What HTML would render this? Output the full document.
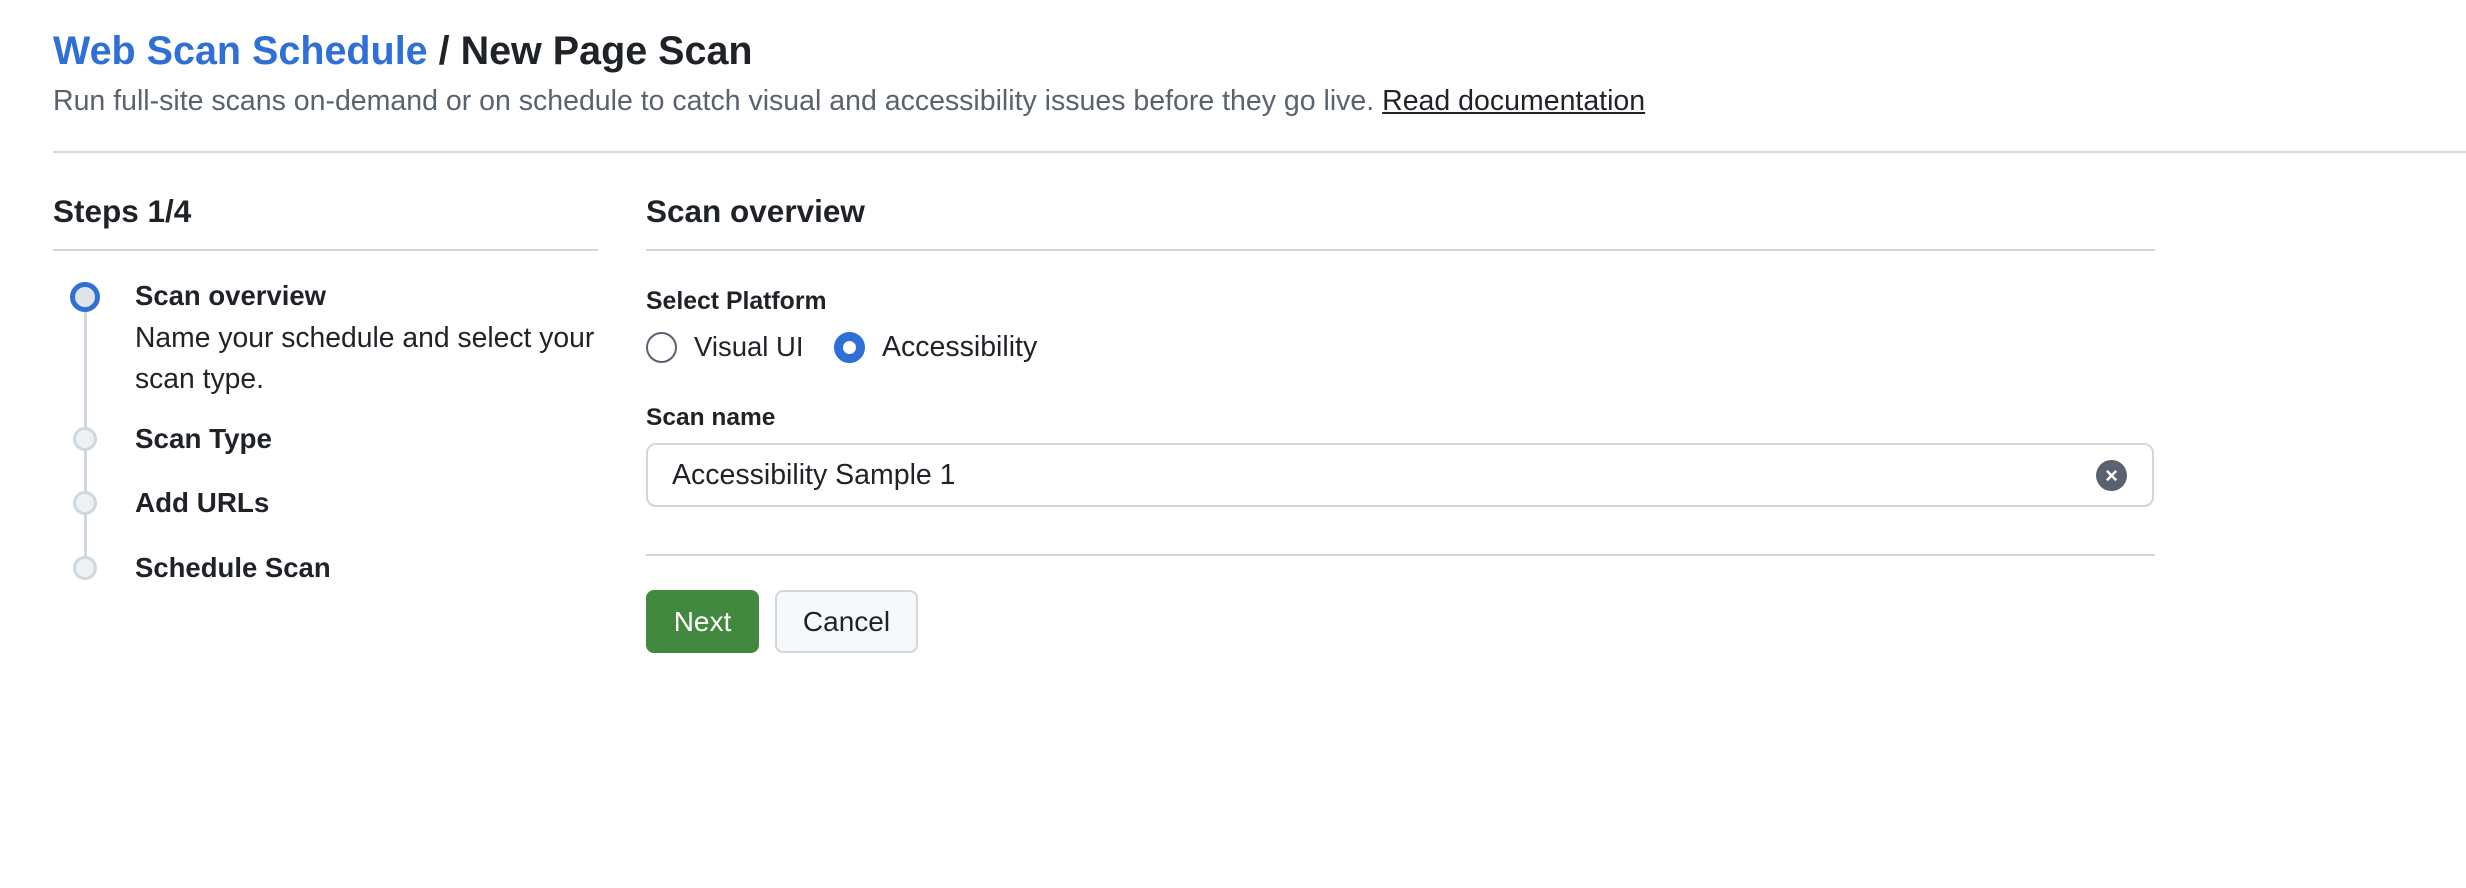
<!DOCTYPE html>
<html><head><meta charset="utf-8"><style>
*{box-sizing:border-box;margin:0;padding:0}
body{width:2466px;height:888px;background:#fff;font-family:"Liberation Sans",sans-serif;color:#1f2328;position:relative;overflow:hidden}
.a{position:absolute;white-space:nowrap}
.hr{position:absolute;height:2px;background:#d0d7de}
.circ{position:absolute;border-radius:50%}
</style></head><body>
<div class="a" style="left:53px;top:27px;font-size:39.5px;font-weight:bold;line-height:48px"><span style="color:#2f6fd6">Web Scan Schedule</span> / New Page Scan</div>
<div class="a" style="left:53px;top:84px;font-size:28.5px;line-height:34px;color:#59636e">Run full-site scans on-demand or on schedule to catch visual and accessibility issues before they go live. <span style="color:#1f2328;text-decoration:underline">Read documentation</span></div>
<div class="hr" style="left:53px;top:151px;width:2413px"></div>

<div class="a" style="left:53px;top:193px;font-size:31.5px;font-weight:bold;line-height:36px">Steps 1/4</div>
<div class="hr" style="left:53px;top:249px;width:545px"></div>
<div style="position:absolute;left:84px;top:300px;width:3px;height:268px;background:#d0d7de"></div>
<div class="circ" style="left:70px;top:282px;width:30px;height:30px;border:5px solid #2f6fd6;background:#dfe4ea"></div>
<div class="circ" style="left:73px;top:427px;width:24px;height:24px;border:3px solid #d0d7de;background:#eef1f4"></div>
<div class="circ" style="left:73px;top:491px;width:24px;height:24px;border:3px solid #d0d7de;background:#eef1f4"></div>
<div class="circ" style="left:73px;top:556px;width:24px;height:24px;border:3px solid #d0d7de;background:#eef1f4"></div>
<div class="a" style="left:135px;top:280px;font-size:27.5px;font-weight:bold;line-height:32px">Scan overview</div>
<div class="a" style="left:135px;top:317px;font-size:28.3px;line-height:41px">Name your schedule and select your<br>scan type.</div>
<div class="a" style="left:135px;top:423px;font-size:27.8px;font-weight:bold;line-height:32px">Scan Type</div>
<div class="a" style="left:135px;top:487px;font-size:27.8px;font-weight:bold;line-height:32px">Add URLs</div>
<div class="a" style="left:135px;top:552px;font-size:27.5px;font-weight:bold;line-height:32px">Schedule Scan</div>

<div class="a" style="left:646px;top:193px;font-size:31.5px;font-weight:bold;line-height:36px">Scan overview</div>
<div class="hr" style="left:646px;top:249px;width:1509px"></div>
<div class="a" style="left:646px;top:288px;font-size:24.8px;font-weight:bold;line-height:28px">Select Platform</div>
<div class="circ" style="left:646px;top:332px;width:31px;height:31px;border:2px solid #59636e"></div>
<div class="a" style="left:694px;top:331px;font-size:27.5px;line-height:32px">Visual UI</div>
<div class="circ" style="left:834px;top:332px;width:31px;height:31px;border:9px solid #2f6fd6"></div>
<div class="a" style="left:882px;top:331px;font-size:28.5px;line-height:32px">Accessibility</div>
<div class="a" style="left:646px;top:404px;font-size:24.5px;font-weight:bold;line-height:28px">Scan name</div>
<div style="position:absolute;left:646px;top:443px;width:1508px;height:64px;border:2px solid #d0d7de;border-radius:10px"></div>
<div class="a" style="left:672px;top:458px;font-size:28.5px;line-height:34px">Accessibility Sample 1</div>
<div class="circ" style="left:2096px;top:460px;width:31px;height:31px;background:#59636e;color:#fff;font-size:22px;line-height:31px;text-align:center;font-weight:bold">×</div>
<div class="hr" style="left:646px;top:554px;width:1509px"></div>
<div style="position:absolute;left:646px;top:590px;width:113px;height:63px;background:#43883f;border-radius:8px;color:#fff;font-size:28px;line-height:63px;text-align:center">Next</div>
<div style="position:absolute;left:775px;top:590px;width:143px;height:63px;background:#f6f8fa;border:2px solid #d0d7de;border-radius:8px;font-size:28px;line-height:59px;text-align:center">Cancel</div>
</body></html>
